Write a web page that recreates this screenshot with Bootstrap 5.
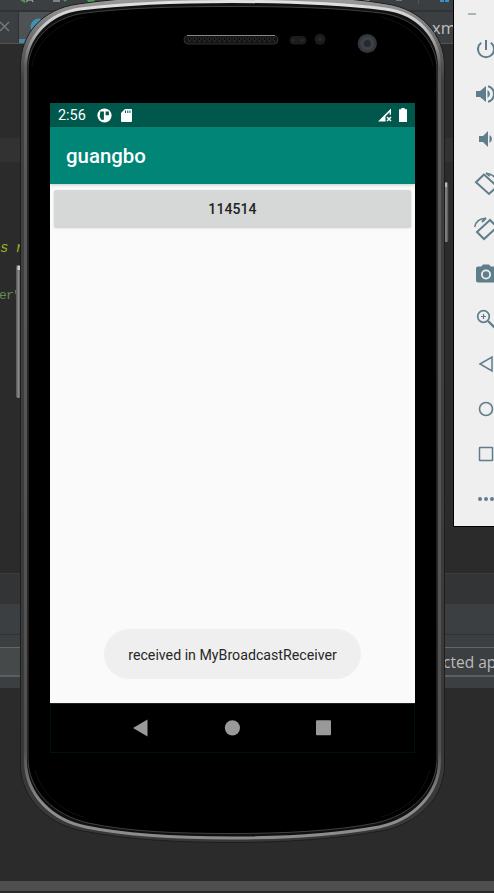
<!DOCTYPE html>
<html lang="en">
<head>
<meta charset="utf-8">
<meta name="viewport" content="width=device-width, initial-scale=1">
<title>guangbo</title>
<link href="https://cdn.jsdelivr.net/npm/bootstrap@5.3.0/dist/css/bootstrap.min.css" rel="stylesheet">
<style>
body{background:#2b2b2b;font-family:Roboto,"Liberation Sans",sans-serif}
.desktop{width:494px;height:893px;background:#2b2b2b}
.ide-top{height:10px;background:#3c3f41;width:454px}
.ide-tabs{height:34px;background:#3c3f41;border-top:2px solid #303234;border-bottom:1px solid #515355;width:454px;font:16.5px "Open Sans","Noto Sans",sans-serif;color:#bfc0c0}
.tab-close{width:19px;border-right:1px solid #2f3133}
.tab-on{width:60px;background:#4e5254;border-bottom:4px solid #4a88a2}
.tab-text{width:22px;line-height:31px;white-space:nowrap}
.editor{height:529px}
.gap-line{height:94px}
.gap-short{height:74px}
.caret-line{height:24px;background:#323232}
.code-a{height:47px;color:#a0b020;font:italic 14px/24px "Liberation Mono",monospace;letter-spacing:-.6px}
.code-b{height:24px;color:#6a8759;font:13px/26px "Liberation Serif",serif;font-family:"Liberation Mono",monospace;letter-spacing:-.7px;margin-left:-1px}
.head-a{height:31px;background:#333435;border-top:1px solid #3b3c3d}
.head-b{height:31px;background:#3c3f41;border-bottom:1px solid #303234}
.head-c{height:53px;background:#3c3f41;padding:12px 0 11px}
.field{height:30px;border-top:1px solid #646667;border-bottom:2px solid #5c5e5f}
.field-l{background:#45494a;width:230px}
.field-r{width:51px;font:15.5px/28px "Open Sans","Noto Sans",sans-serif;color:#bbb;white-space:nowrap}
.bottom-gap{height:193px}
.scrollbar-h{height:10px;background:#4e4e4e}
.device,.frame{left:0;top:0;width:494px;height:893px}
.screen{left:50px;top:103px;width:365px;height:650px;background:#fafafa}
.status{height:24px;background:#00574b;color:#fff;font-size:14.4px;line-height:24px;padding:0 8px 0 8px}
.status .clock{width:39px;padding-top:2px}
.appbar{height:57px;background:#008577;color:#fff;font-size:20.4px;font-weight:500;padding:2px 16px 0;box-shadow:0 1px 3px #0003;z-index:1}
.content{height:519px;padding:6px 4px 24px}
.pad{height:37px;width:357px;background:#d6d7d7;border-radius:2px;border:0;color:#222;font-size:14px;font-weight:500;box-shadow:0 1px 2px #0003;padding:2px 0 0;letter-spacing:.1px}
.toast-msg{width:257px;height:50px;border-radius:25px;background:#efefef;color:#272727;font-size:14.2px;padding-top:3px;white-space:nowrap}
.navkeys{height:50px;background:#000;border:1px solid #00120f;border-top-color:#222}
.tools{left:453px;top:-2px;width:60px;height:529px;background:#efefef;border:1px solid #000;padding:15px 0 0 20px}
.tools svg{width:24px;height:24px;color:#607d8b;flex:none;display:block}
.tools .mini{width:8px;background:#a8b5bb;margin:-1px 0 22px -6px;flex:none;height:2px}
.tools .keys{gap:21px}
</style>
<script src="https://cdn.jsdelivr.net/npm/bootstrap@5.3.0/dist/js/bootstrap.bundle.min.js"></script>
</head>
<body>
<div class="desktop position-relative overflow-hidden">
  <main class="d-flex flex-column">
    <div class="ide-top"><svg class="d-block" width="454" height="10"><path d="M20 0h5v3z" fill="#499c54"/><path d="M26 2l2-2h4l1 2M53 1h7" stroke="#999" stroke-width="1.5" fill="none"/><circle cx="91" cy="-2" r="4.500" fill="#499c54"/><path d="M64 1l3-2" stroke="#499c54" stroke-width="2"/><circle cx="366" cy="-3" r="5" fill="#aaa"/><path d="M396 0h6" stroke="#777" stroke-width="2"/><path d="M418.500 0v4" stroke="#555"/><path d="M440 0h4v2h-4zM445 0h4v2h-4z" fill="#3592c4"/></svg></div>
    <div class="ide-tabs d-flex">
      <div class="tab-close"><svg class="d-block" width="18" height="31"><path d="M0 10l9 9M9 10l-9 9" stroke="#777b7d" stroke-width="1.300"/></svg></div>
      <div class="tab-on"><svg class="d-block" width="59" height="27"><circle cx="20" cy="15" r="8.500" fill="#4590b0"/></svg></div>
      <div class="tab-text ms-auto">xml</div>
    </div>
    <div class="editor overflow-hidden">
      <div class="gap-line"></div><div class="caret-line"></div><div class="gap-short"></div>
      <div class="code-a">s r</div>
      <div class="code-b">er"</div>
    </div>
    <div class="head-a"></div><div class="head-b"></div>
    <div class="head-c d-flex justify-content-between"><div class="field field-l"></div><div class="field field-r">cted ap</div></div>
    <div class="bottom-gap"></div><div class="scrollbar-h"></div>
  </main>

  <section class="device position-absolute">
    <svg class="frame d-block" viewBox="0 0 494 893">
      <defs>
        <linearGradient id="rim" gradientUnits="userSpaceOnUse" x1="0" y1="0" x2="0" y2="893"><stop offset="0" stop-color="#e4e4e4"/><stop offset=".03" stop-color="#c4c4c4"/><stop offset=".075" stop-color="#5b5b5b"/><stop offset=".84" stop-color="#505050"/><stop offset=".9" stop-color="#8d8d8d"/><stop offset="1" stop-color="#8a8a8a"/></linearGradient>
        <linearGradient id="shell" gradientUnits="userSpaceOnUse" x1="0" y1="0" x2="0" y2="893"><stop offset="0" stop-color="#989898"/><stop offset=".04" stop-color="#707070"/><stop offset=".09" stop-color="#414141"/><stop offset="1" stop-color="#373737"/></linearGradient>
        <linearGradient id="key" x1="0" x2="1"><stop offset="0" stop-color="#555"/><stop offset=".5" stop-color="#888"/><stop offset="1" stop-color="#444"/></linearGradient>
        <pattern id="mesh" width="5" height="4" patternUnits="userSpaceOnUse" x="187" y="37"><circle cx="2.500" cy="2" r="1.500" fill="#050505" stroke="#383838" stroke-width=".7"/></pattern>
      </defs>
      <rect x="16" y="265" width="5" height="133" rx="2" fill="url(#key)"/><rect x="17.500" y="266" width="3" height="4" fill="#ccc"/>
      <rect x="443.500" y="182" width="5" height="60" rx="2" fill="url(#key)"/><rect x="444" y="183" width="3" height="4" fill="#bbb"/>
      <path d="M20.500 66C20.500 34 42 9 78 4C125-3 180-5 232-5S340-4 387 4C420 9 444.500 34 444.500 66V765C444.500 797 419 824 381 831C335 839 285 842.500 232 842.500S130 840 83 831C46 824 20.500 797 20.500 765Z" fill="url(#shell)" stroke="#1d1d1d"/>
      <path d="M25.500 68C25.500 36 50 13 80 9C130 3 180 1.500 232 1.500S335 3 385 9C417 13 439.500 36 439.500 68V760C439.500 795 412 820 379 827C335 835 285 838 232 838S130 836 86 827C52 820 25.500 795 25.500 760Z" fill="#111" stroke="url(#rim)" stroke-width="3"/>
      <path d="M28 70C28 39 53 17 85 13C130 7.500 180 6.500 232 6.500S335 7.500 381 13C413 17 437 40 437 70V758C437 791 411 815 376 823C335 831 285 833.500 232 833.500S130 832 88 823C54 815 28 791 28 758Z" fill="#000" stroke="#404040"/>
      <path d="M32 66C36 44 54 24 84 17M433 66C429 44 410 24 381 17M35 770C42 794 60 811 84 817M430 770C423 794 405 811 381 817" fill="none" stroke="#111"/>
      <rect x="184" y="35.500" width="94" height="8.500" rx="4" fill="#141414" stroke="#303030"/><path d="M187 35.500h88" stroke="#878787"/><rect x="187" y="37" width="88" height="5" fill="url(#mesh)"/>
      <rect x="289.500" y="36" width="17" height="8.500" rx="4.250" fill="#1c1c1c"/><circle cx="293.500" cy="40.200" r="1.500" fill="#292929"/><circle cx="302" cy="40.200" r="1.500" fill="#292929"/>
      <circle cx="320" cy="39.300" r="5.500" fill="#1c1c1c"/><circle cx="320" cy="39.300" r="2" fill="#292929"/>
      <circle cx="367.300" cy="43.500" r="9.600" fill="#32363b"/><circle cx="367.300" cy="43.500" r="7" fill="#3c4148"/><circle cx="367.300" cy="43.500" r="3.500" fill="#262a30"/>
    </svg>
    <div class="screen position-absolute d-flex flex-column">
      <div class="status d-flex align-items-center">
        <span class="clock">2:56</span>
        <svg width="15" height="15" viewBox="0 0 15 15"><circle cx="7.500" cy="7.500" r="7.100" fill="#fff"/><path d="M3.300 3.500h3.600v8.300H4.200L2.700 8.500zM8.600 3.400h3.300v3.800H8.600z" fill="#00574b"/></svg>
        <svg class="ms-2" width="15" height="15" viewBox="0 0 15 15"><path d="M5 1h6q1 0 1 1v11q0 1-1 1H2q-1 0-1-1V5z" fill="#fff"/><path d="M5.500 2.500v2.500M7.800 2.500v2.500M10 2.500v2.500" stroke="#00574b"/></svg>
        <svg class="ms-auto" width="14" height="14" viewBox="0 0 14 14"><path d="M0 13.500L13 .5v6l-1.300.500V4.200L7.500 8.300v5.200z" fill="#fff"/><path d="M9 9l4 4M13 9l-4 4" stroke="#fff" stroke-width="1.500"/></svg>
        <svg class="ms-1" width="11" height="14" viewBox="-3 0 11 14"><path d="M2.300 0h3.400v1.300H8V14H0V1.300h2.300z" fill="#fff"/></svg>
      </div>
      <div class="appbar d-flex align-items-center position-relative">guangbo</div>
      <div class="content d-flex flex-column justify-content-between align-items-center">
        <button class="pad d-flex align-items-center justify-content-center" type="button">114514</button>
        <div class="toast-msg d-flex align-items-center justify-content-center">received in MyBroadcastReceiver</div>
      </div>
      <div class="navkeys"><svg class="d-block" width="363" height="47"><path d="M82 24L96.500 15.500v17z" fill="#999"/><circle cx="181.400" cy="23.800" r="7.600" fill="#999"/><rect x="265" y="16.200" width="15" height="15" rx="1" fill="#999"/></svg></div>
    </div>
  </section>

  <aside class="tools position-absolute d-flex flex-column overflow-hidden">
    <div class="mini"></div>
    <div class="keys d-flex flex-column">
      <svg viewBox="0 0 24 24" fill="none" stroke="currentColor" stroke-width="2"><path d="M12 3v10M7.200 5.800a8 8 0 1 0 9.600 0"/></svg>
      <svg viewBox="0 0 24 24" fill="currentColor"><path d="M2 9v6h4l6 5V4L6 9zM13.500 8v8a4.500 4.500 0 0 0 0-8zM14 3.200v2.100a7 7 0 0 1 0 13.400v2.100a9 9 0 0 0 0-17.600z"/></svg>
      <svg viewBox="0 0 24 24" fill="currentColor"><path d="M5 9v6h4l5 5V4L9 9zM15.500 8v8a4.500 4.500 0 0 0 0-8z"/></svg>
      <svg viewBox="0 0 24 24" fill="none" stroke="currentColor"><path d="M10 2.500L2 10.200 15 22l8-7.500z" stroke-width="2"/><path d="M13 1.500a10 10 0 0 1 9.500 8" stroke-width="1.500"/><path d="M12 1l4 3" stroke-width="2"/></svg>
      <svg viewBox="0 0 24 24" fill="none" stroke="currentColor"><path d="M16 3L3 15 10 22 23 10z" stroke-width="2"/><path d="M.8 10A10 10 0 0 1 12 1.500" stroke-width="1.500"/><path d="M12 1L8 5" stroke-width="2"/></svg>
      <svg viewBox="0 0 24 24" fill="currentColor" fill-rule="evenodd"><path d="M9 2.500L7.200 4.500H4a2 2 0 0 0-2 2v12a2 2 0 0 0 2 2h16a2 2 0 0 0 2-2v-12a2 2 0 0 0-2-2h-3.200L15 2.500zM12 7.500a5 5 0 1 1 0 10 5 5 0 0 1 0-10zM12 9.300a3.200 3.200 0 1 0 0 6.400 3.200 3.200 0 0 0 0-6.400z"/></svg>
      <svg viewBox="0 0 24 24" fill="none" stroke="currentColor"><circle cx="9.500" cy="9.500" r="5.800" stroke-width="1.700"/><path d="M14 14l6.500 6.500" stroke-width="2.300"/><path d="M9.500 7v5M7 9.500h5" stroke-width="1.200"/></svg>
      <svg viewBox="0 0 24 24" fill="none" stroke="currentColor" stroke-width="1.500"><path d="M6 12l12-7v14z"/></svg>
      <svg viewBox="0 0 24 24" fill="none" stroke="currentColor" stroke-width="1.600"><circle cx="12" cy="12" r="6.500"/></svg>
      <svg viewBox="0 0 24 24" fill="none" stroke="currentColor" stroke-width="1.500"><rect x="5.500" y="5.500" width="13" height="13" rx=".5"/></svg>
      <svg viewBox="0 0 24 24" fill="currentColor"><circle cx="6" cy="12" r="2"/><circle cx="12" cy="12" r="2"/><circle cx="18" cy="12" r="2"/></svg>
    </div>
  </aside>
</div>
</body>
</html>
